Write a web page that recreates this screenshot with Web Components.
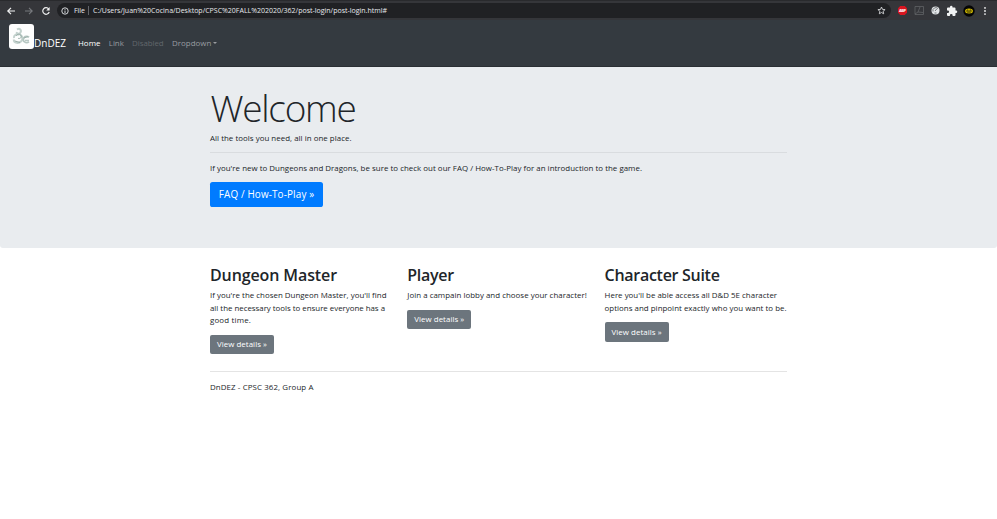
<!DOCTYPE html>
<html lang="en">
<head>
<meta charset="utf-8">
<title>DnDEZ</title>
<style>
html,body{margin:0;height:100%;background:#fff;overflow:hidden}
body{font:7.9px/12.5px "Open Sans","Noto Sans",sans-serif;color:#212529}
</style>
</head>
<body>
<dnd-app></dnd-app>
<script>
const define = (name, html, setup) => customElements.define(name, class extends HTMLElement {
  connectedCallback() {
    if (this.shadowRoot) return;
    const t = document.createElement('template');
    t.innerHTML = html;
    this.attachShadow({mode: 'open'}).append(t.content.cloneNode(true));
    if (setup) setup(this, this.shadowRoot);
  }
});

/* One line of text whose tracking is adjusted to the width given in "w". */
define('text-line', `<style>:host{display:block;white-space:nowrap;width:max-content}span{display:inline-block}</style><span><slot></slot></span>`, (el, root) => {
  const span = root.querySelector('span');
  const goal = +el.getAttribute('w');
  const count = el.textContent.length;
  if (goal && count) el.style.letterSpacing = ((goal - span.getBoundingClientRect().width) / count).toFixed(4) + 'px';
});

define('browser-bar', `<style>
:host{display:flex;height:20px;background:#35363a;align-items:center;box-sizing:border-box;color:#e8eaed;font-size:7px;line-height:14px;border-top:1px solid #292a2d}
svg{display:block;flex:none}
.nav{display:flex;gap:7.5px;padding-left:6px;width:50px;box-sizing:border-box}
.url{display:flex;align-items:center;box-sizing:border-box;height:15px;width:834px;margin-left:7px;border-radius:8px;background:#202124;padding:0 5px 0 4px}
.file{margin-left:5px}
.sep{width:1px;height:9px;background:#63656a;margin:0 4px 0 3px}
.star{margin-left:auto}
.ext{display:flex;align-items:center;flex:1;padding-left:6px;gap:5px}
</style>
<div class="nav">
<svg width="10" height="10" viewBox="0 0 10 10" fill="none" stroke="#f1f1f1" stroke-width="1.2"><path d="M9 5H2M5 1.8 1.8 5 5 8.2"/></svg>
<svg width="10" height="10" viewBox="0 0 10 10" fill="none" stroke="#77797d" stroke-width="1.1"><path d="M1 5h7M5 1.8 8.2 5 5 8.2"/></svg>
<svg width="10" height="10" viewBox="0 0 10 10" fill="none" stroke="#f1f1f1" stroke-width="1.2"><path d="M7.7 3A3.3 3.3 0 1 0 8.2 6"/><path d="M8.6 1v3.4H5.2z" fill="#f1f1f1" stroke="none"/></svg>
</div>
<div class="url">
<svg width="8" height="8" viewBox="0 0 8 8" fill="none" stroke="#e8eaed" stroke-width=".9"><circle cx="4" cy="4" r="3.2"/><path d="M4 3.5V6M4 2v.8"/></svg>
<text-line class="file" w="11">File</text-line><i class="sep"></i>
<text-line w="294">C:/Users/Juan%20Cocina/Desktop/CPSC%20FALL%202020/362/post-login/post-login.html#</text-line>
<svg class="star" width="9" height="9" viewBox="0 0 9 9" fill="none" stroke="#d5d6d8" stroke-width=".9"><path d="m4.5 1 1 2.4 2.6.2-2 1.7.6 2.5-2.2-1.3-2.2 1.3.6-2.5-2-1.7 2.6-.2z"/></svg>
</div>
<div class="ext">
<svg width="11" height="11" viewBox="0 0 11 11"><path d="M3.2 1h4.6L10 3.2v4.6L7.8 10H3.2L1 7.8V3.2z" fill="#d9151f"/><text x="5.5" y="7" font-size="4" font-weight="700" textLength="7" fill="#fff" text-anchor="middle">ABP</text></svg>
<svg width="12" height="11" viewBox="0 0 12 11" fill="none" stroke="#66686c" stroke-width=".7"><path d="M2 1.5h8.5v8H2zM2 9l3-2 2-5M5 7l5 .5"/></svg>
<svg width="11" height="11" viewBox="0 0 11 11"><circle cx="5.5" cy="5.5" r="4" fill="#e2e4e6"/><path d="M3 6.5a3 3 0 0 1 5-3M5 6l2-2.3M4.5 8h2" stroke="#777b7e" fill="none"/></svg>
<svg width="12" height="12" viewBox="0 0 24 24"><path fill="#f1f1f1" d="M20 11h-1V7a2 2 0 0 0-2-2h-4V4a2.5 2.5 0 0 0-5 0v1H4a2 2 0 0 0-2 2v3.8h1.5a2.7 2.7 0 0 1 0 5.4H2V20a2 2 0 0 0 2 2h3.8v-1.5a2.7 2.7 0 0 1 5.4 0V22H17a2 2 0 0 0 2-2v-4h1a2.5 2.5 0 0 0 0-5z"/></svg>
<svg width="12" height="12" viewBox="0 0 12 12"><circle cx="6" cy="6" r="5.7" fill="#050505"/><ellipse cx="6" cy="6" rx="4" ry="2.5" fill="#d6bd00"/><path d="M2.8 6h6.4M4 5h1.2M6.8 5H8M4.2 7.2h3.6" stroke="#151505" stroke-width=".7"/></svg>
<svg width="10" height="10" viewBox="0 0 10 10" fill="#f1f1f1"><circle cx="5" cy="1.9" r=".9"/><circle cx="5" cy="5" r=".9"/><circle cx="5" cy="8.1" r=".9"/></svg>
</div>`);

define('dnd-logo', `<style>:host{display:block;width:25px;height:25px}svg{display:block}</style>
<svg width="25" height="25" viewBox="0 0 25 25" fill="none"><rect width="25" height="25" rx="3" fill="#fdfefe"/>
<path d="M8 5.5c3-2 5 1 3.2 3.4-1.2 1.5-3.8.8-3.3-1M5 14c-.5-3 2.5-4.5 5-3M4.8 15.5c0 4 5 4.5 7.6 1.5 1.8-2.2.6-5-1.4-6.8" stroke="#c3d2ce" stroke-width="2"/>
<path d="M7 12c1-2 4-2.5 5-.5s-1 3.5-3 2.8M6 17l5 1.5" stroke="#91a8a2" stroke-width=".9"/>
<path d="M20 13.2c-2.5-2-6-.3-5.7 2.7.3 2.8 3.8 3.4 5.6 1.7" stroke="#b4c6c1" stroke-width="1.8"/><path d="m15 14 4-1.4M16 16.3h4" stroke="#92a8a3" stroke-width=".8"/></svg>`);

define('site-nav', `<style>
:host{display:flex;height:46.5px;box-sizing:border-box;background:#343a40;padding:4.2px 9px 0;align-items:flex-start;border-bottom:1px solid #2a2f34}
.brand{font-size:10px;line-height:16px;color:#fff;margin-top:11.3px}
.links{display:flex;margin:13px 0 0 12px;gap:8.3px;color:#999ca0}
.on{color:#fff}.off{color:#62676c}
.drop{display:flex;gap:2px}
.drop i{border:2.3px solid transparent;border-top-color:#999ca0;border-bottom:0;height:0;margin-top:5px}
</style><dnd-logo></dnd-logo><text-line class="brand" w="32">DnDEZ</text-line>
<div class="links"><text-line class="on" w="22.5">Home</text-line><text-line w="15">Link</text-line><text-line class="off" w="31.5">Disabled</text-line><div class="drop"><text-line w="39.5">Dropdown</text-line><i></i></div></div>`);

define('link-button', `<style>
:host{display:flex;width:64px;height:19.6px;box-sizing:border-box;align-items:center;justify-content:center;border-radius:2px;background:#6c757d;color:#fff}
:host([primary]){width:113px;height:25px;background:#007bff;border-radius:2.6px;font-size:9.9px}
</style><slot></slot>`);

define('welcome-banner', `<style>
:host{display:block;height:181.5px;box-sizing:border-box;background:#e9ecef;border-radius:0 0 3px 3px;padding:17px 210px 0}
h1{margin:0 0 0 .5px;font-size:37px;font-weight:300;line-height:47px}
hr{border:0;height:1px;background:#d9dcdf;margin:7.5px 0 9px}
p{margin:0}.lead{margin-top:1px}
link-button{margin-top:7.5px}
</style><h1><text-line w="145">Welcome</text-line></h1>
<p class="lead"><text-line w="141.5">All the tools you need, all in one place.</text-line></p><hr>
<p><text-line w="432">If you're new to Dungeons and Dragons, be sure to check out our FAQ / How-To-Play for an introduction to the game.</text-line></p>
<link-button primary><text-line w="95.5">FAQ / How-To-Play »</text-line></link-button>`);

define('feature-card', `<style>
:host{display:block}
h2{margin:0 0 4px;font-size:16px;line-height:20px;font-weight:600}
link-button{margin-top:8.3px}
</style><h2><slot name="title"></slot></h2><slot></slot><link-button><text-line w="50">View details »</text-line></link-button>`);

define('dnd-app', `<style>
:host{display:block}
main{padding:17px 210px 0}
.cards{display:grid;grid-template-columns:repeat(3,197.3px)}
hr{border:0;height:1px;background:#e4e4e4;margin:17px 0 9px}
</style><browser-bar></browser-bar><site-nav></site-nav><welcome-banner></welcome-banner>
<main><div class="cards">
<feature-card><text-line slot="title" w="127">Dungeon Master</text-line>
<text-line w="176.5">If you're the chosen Dungeon Master, you'll find</text-line><text-line w="175">all the necessary tools to ensure everyone has a</text-line><text-line w="41">good time.</text-line></feature-card>
<feature-card><text-line slot="title" w="46.5">Player</text-line><text-line w="179.5">Join a campain lobby and choose your character!</text-line></feature-card>
<feature-card><text-line slot="title" w="115">Character Suite</text-line><text-line w="172.5">Here you'll be able access all D&amp;D 5E character</text-line><text-line w="182">options and pinpoint exactly who you want to be.</text-line></feature-card>
</div><hr><footer><text-line w="103.5">DnDEZ - CPSC 362, Group A</text-line></footer></main>`);
</script>
</body>
</html>
